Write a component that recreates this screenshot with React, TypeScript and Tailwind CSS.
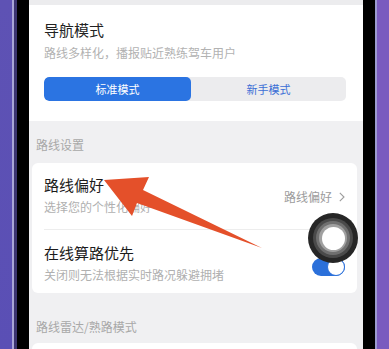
import React from "react";

const font = { fontFamily: '"Noto Sans CJK SC", "Noto Sans", sans-serif' };

export default function App() {
  return (
    <div
      className="relative w-[389px] h-[349px] overflow-hidden flex bg-[#6a55b8]"
      style={font}
    >
      {/* left frame */}
      <div className="w-[12px] h-full bg-gradient-to-b from-[#5e52b4] to-[#5a4fb5]" />
      <div className="w-[2px] h-full bg-[#a9a6d6]" />
      <div className="w-[3px] h-full bg-[#3b3470]" />
      <div className="w-[12px] h-full bg-black" />

      {/* screen */}
      <div className="w-[334px] h-full bg-[#f0f0f2] flex flex-col">
        <div className="h-[5px] bg-[#ececee] shrink-0" />
        {/* nav mode card */}
        <div className="bg-white pl-[15px] pr-[17px] pt-[15px] pb-[20px] shrink-0">
          <div className="text-[15px] leading-[20px] text-[#222]">导航模式</div>
          <div className="mt-[5px] text-[12px] leading-[16px] text-[#b2b2b2]">
            路线多样化，播报贴近熟练驾车用户
          </div>
          <div className="mt-[16px] h-[24px] flex rounded-[5px] bg-[#ececee] overflow-hidden">
            <div className="w-[147px] rounded-[5px] bg-[#2b74e2] flex items-center justify-center text-[11px] text-white">
              标准模式
            </div>
            <div className="flex-1 flex items-center justify-center text-[11px] text-[#3b6fd6]">
              新手模式
            </div>
          </div>
        </div>

        <div className="pl-[7px] mt-[16px] text-[12px] leading-[16px] text-[#a8a8a8]">路线设置</div>

        {/* route settings card */}
        <div className="mt-[10px] ml-[3px] mr-[6px] bg-white rounded-[6px] shrink-0">
          <div className="flex items-center pl-[12px] pr-[12px] pt-[13px] pb-[14px]">
            <div className="flex-1">
              <div className="text-[15px] leading-[18px] text-[#1c1c1c]">路线偏好</div>
              <div className="mt-[5px] text-[12px] leading-[16px] text-[#b0b0b0]">选择您的个性化偏好</div>
            </div>
            <div className="flex items-center gap-[7px] text-[12px] text-[#9c9c9c] mt-[2px]">
              <span>路线偏好</span>
              <svg width="6" height="10" viewBox="0 0 6 10">
                <polyline points="0.8,0.8 5,5 0.8,9.2" fill="none" stroke="#9c9c9c" strokeWidth="1.1" />
              </svg>
            </div>
          </div>
          <div className="ml-[12px] h-px bg-[#ededed]" />
          <div className="flex pl-[12px] pr-[12px] pt-[14px] pb-[10px]">
            <div className="flex-1">
              <div className="text-[15px] leading-[18px] text-[#1c1c1c]">在线算路优先</div>
              <div className="mt-[5px] text-[12px] leading-[16px] text-[#b0b0b0]">
                关闭则无法根据实时路况躲避拥堵
              </div>
            </div>
            <div className="self-center mt-[6px] w-[33px] h-[18px] rounded-full bg-[#2b70da] relative">
              <div className="absolute right-0 top-0 w-[18px] h-[18px] rounded-full bg-white border border-[#2b70da]" />
            </div>
          </div>
        </div>

        <div className="pl-[7px] mt-[26px] text-[12px] leading-[16px] text-[#a8a8a8]">路线雷达/熟路模式</div>
        <div className="mt-[8px] ml-[3px] mr-[6px] h-[20px] bg-white rounded-t-[6px] shrink-0" />
      </div>

      {/* right frame */}
      <div className="w-[12px] h-full bg-black" />
      <div className="w-[2px] h-full bg-[#9b9ad0]" />
      <div className="flex-1 h-full bg-[#7a5bbf]" />

      {/* arrow overlay */}
      <svg
        className="absolute left-0 top-0 pointer-events-none"
        width="389"
        height="349"
        viewBox="0 0 389 349"
      >
        <polygon
          points="104,180 149,177 143,190 262,248 137,203 132,216"
          fill="#e4502a"
        />
      </svg>

      {/* assistive touch */}
      <div className="absolute left-[308px] top-[213px] w-[50px] h-[50px] rounded-full bg-[#262626] flex items-center justify-center">
        <div className="w-[40px] h-[40px] rounded-full bg-[#4a4a4a] flex items-center justify-center">
          <div className="w-[34px] h-[34px] rounded-full bg-[#707070] flex items-center justify-center">
            <div className="w-[28px] h-[28px] rounded-full bg-[#a0a0a0] flex items-center justify-center">
              <div className="w-[23px] h-[23px] rounded-full bg-white" />
            </div>
          </div>
        </div>
      </div>
    </div>
  );
}
